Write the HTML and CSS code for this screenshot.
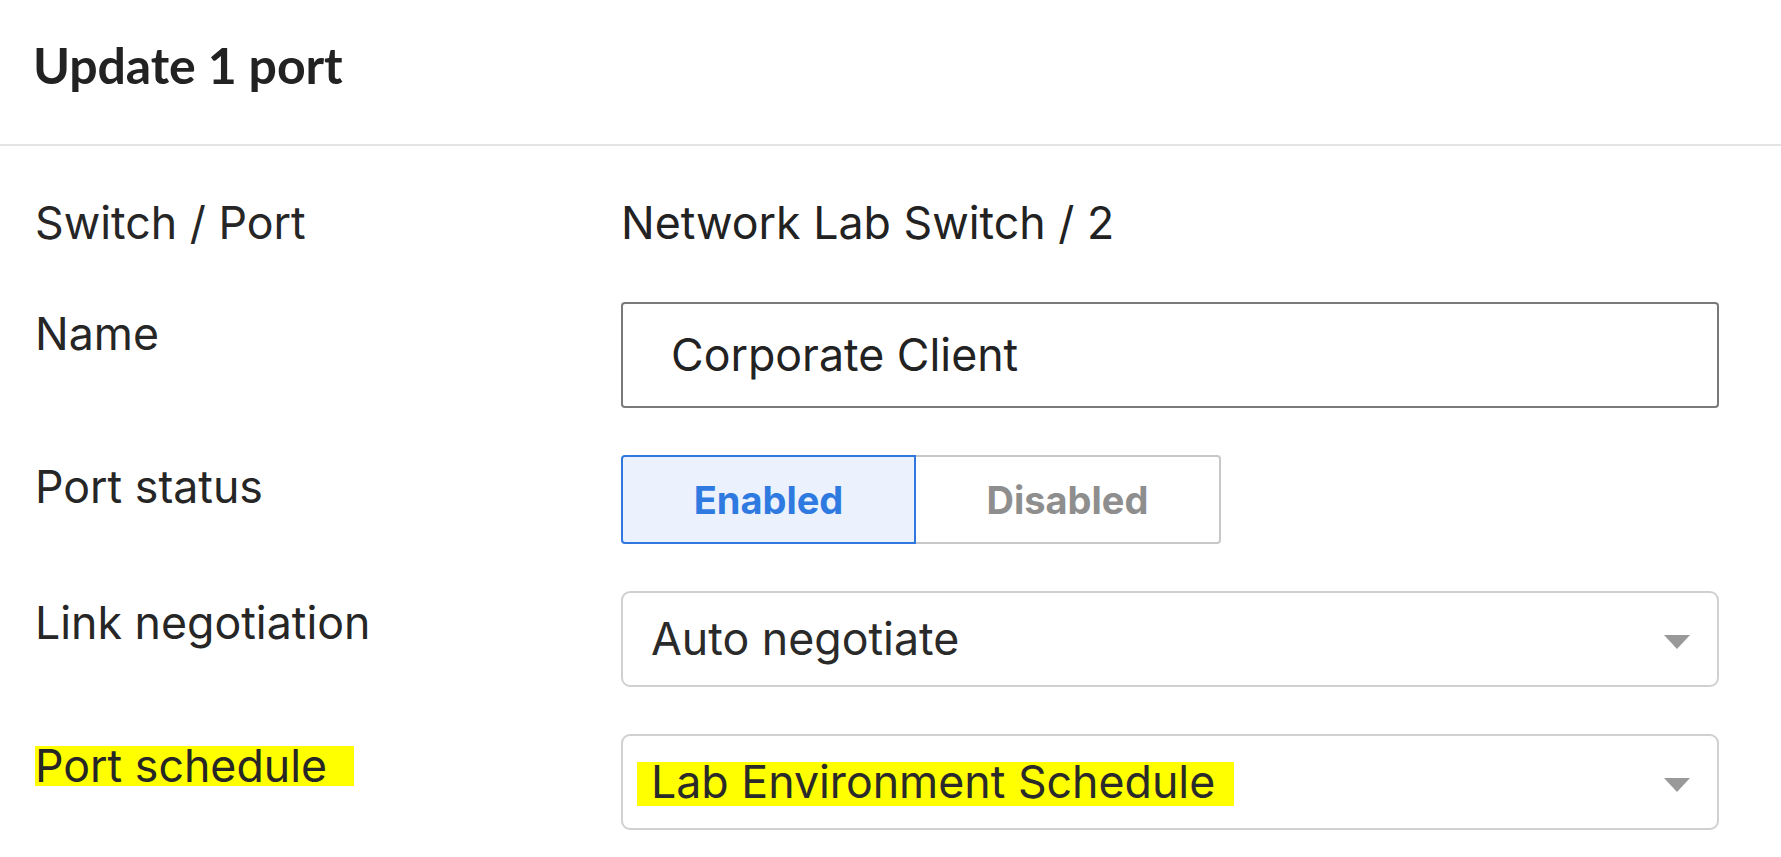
FILE: index.html
```html
<!DOCTYPE html>
<html lang="en">
<head>
<meta charset="utf-8">
<title>Update 1 port</title>
<link rel="stylesheet" href="styles.css">
</head>
<body>
<header class="header">
  <h1 class="title">Update 1 port</h1>
</header>
<main class="form">
  <div class="label first">Switch / Port</div>
  <div class="value first">Network Lab Switch / 2</div>

  <div class="label">Name</div>
  <div class="input">Corporate Client</div>

  <div class="label">Port status</div>
  <div class="segmented">
    <div class="seg seg-on">Enabled</div>
    <div class="seg seg-off">Disabled</div>
  </div>

  <div class="label">Link negotiation</div>
  <div class="select">
    <span class="select-text">Auto negotiate</span>
    <svg class="caret" width="26" height="14" viewBox="0 0 26 14"><path d="M0 0H26L13 14Z" fill="#999"/></svg>
  </div>

  <div class="label"><span class="hl hl-label">Port schedule</span></div>
  <div class="select">
    <span class="select-text"><span class="hl hl-value">Lab Environment Schedule</span></span>
    <svg class="caret" width="26" height="14" viewBox="0 0 26 14"><path d="M0 0H26L13 14Z" fill="#999"/></svg>
  </div>
</main>
</body>
</html>
```
FILE: styles.css
```css
html, body {
  margin: 0;
  padding: 0;
  background: #ffffff;
}
body {
  font-family: "Inter", "Liberation Sans", sans-serif;
  color: #242424;
  width: 1781px;
  height: 857px;
  overflow: hidden;
}
.header {
  height: 146px;
  box-sizing: border-box;
  padding: 40px 0 0 33px;
  border-bottom: 2px solid #e4e4e4;
}
.title {
  margin: 0;
  font-family: "Lato", "Inter", sans-serif;
  font-weight: 700;
  font-size: 50px;
  line-height: 50px;
  color: #222222;
  letter-spacing: -0.1px;
}
.form {
  display: grid;
  grid-template-columns: 586px 1fr;
  row-gap: 47px;
  padding: 45px 62px 0 35px;
  align-items: start;
  font-size: 44.7px;
  line-height: 56px;
}
.first {
  margin-bottom: 4px;
}
.label {
  padding-top: 4px;
  color: #262626;
}
.value {
  color: #222222;
}
.value.first {
  padding-top: 4px;
}
.input {
  height: 106px;
  box-sizing: border-box;
  border: 2px solid #7a7a7a;
  border-radius: 4px;
  padding-left: 48px;
  display: flex;
  align-items: center;
  color: #222222;
}
.segmented {
  display: flex;
  height: 89px;
}
.seg {
  box-sizing: border-box;
  display: flex;
  align-items: center;
  justify-content: center;
  font-weight: 700;
  font-size: 38px;
}
.seg-on {
  width: 295px;
  background: #ebf2fd;
  border: 2px solid #3078e0;
  border-radius: 4px 0 0 4px;
  color: #2f7ae0;
}
.seg-off {
  width: 305px;
  border: 2px solid #c8c8c8;
  border-left: none;
  border-radius: 0 4px 4px 0;
  color: #8e8e8e;
}
.select {
  height: 96px;
  box-sizing: border-box;
  border: 2px solid #d0d0d0;
  border-radius: 9px;
  padding: 0 27px 0 28px;
  display: flex;
  align-items: center;
  justify-content: space-between;
  color: #2a2a2a;
}
.caret {
  display: block;
  margin-top: 6px;
}
.hl {
  display: inline-block;
  background: #ffff00;
  line-height: 40px;
}
.hl-label {
  padding-right: 27px;
}
.hl-value {
  margin-left: -14px;
  padding: 0 19px 4px 14px;
}
```
